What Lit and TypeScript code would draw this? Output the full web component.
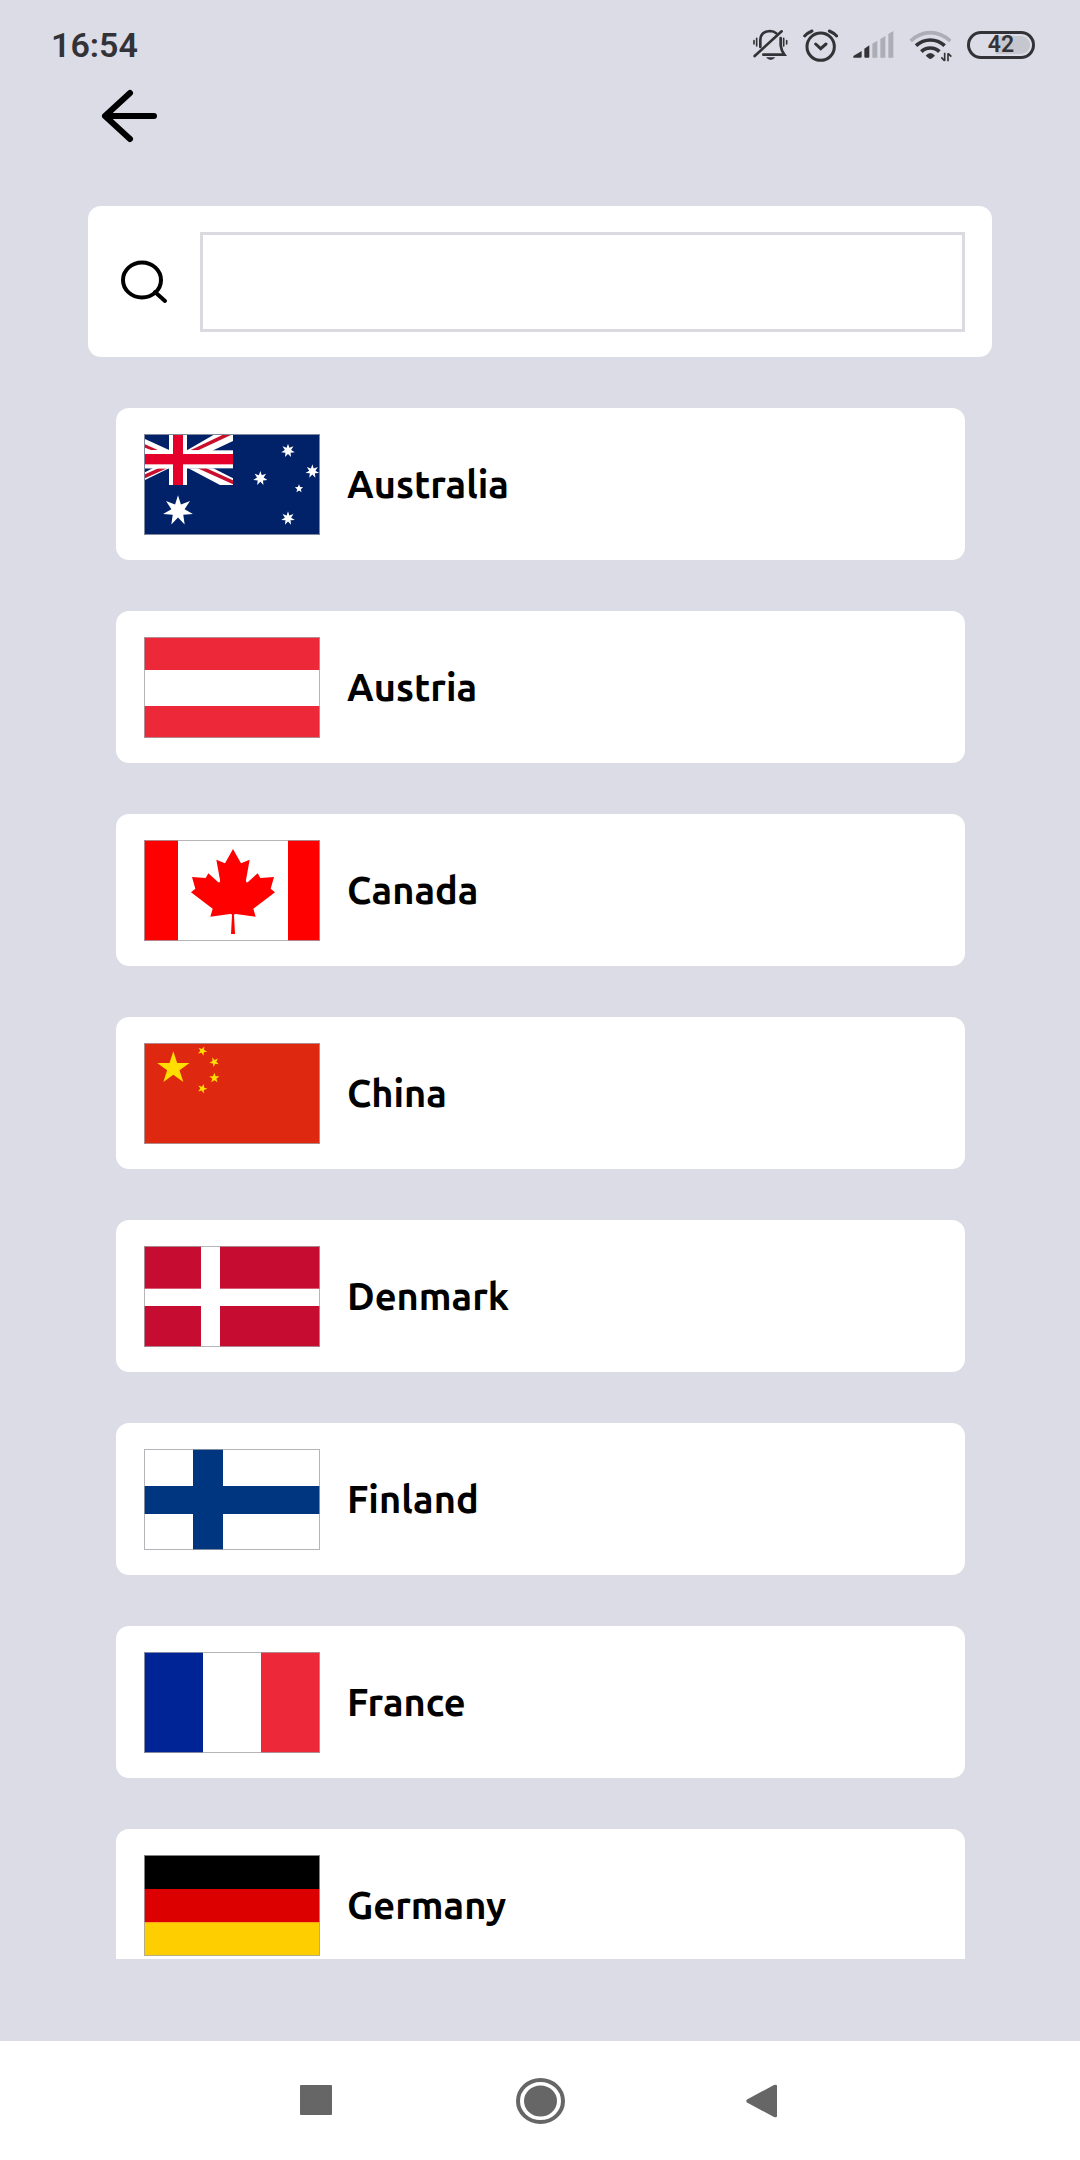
import { LitElement, html, svg, css, type SVGTemplateResult } from "lit";
import { customElement, property, state } from "lit/decorators.js";

/** Points of a regular star polygon, starting at the given angle (degrees, 0 = up). */
function star(cx: number, cy: number, outer: number, tips = 5, turn = 0, ratio = 0.4): string {
  const points: string[] = [];
  for (let i = 0; i < tips * 2; i++) {
    const r = i % 2 ? outer * ratio : outer;
    const a = (turn * Math.PI) / 180 + (i * Math.PI) / tips;
    points.push(`${(cx + r * Math.sin(a)).toFixed(1)},${(cy - r * Math.cos(a)).toFixed(1)}`);
  }
  return points.join(" ");
}

const rect = (x: number, y: number, w: number, h: number, fill: string) =>
  svg`<rect x=${x} y=${y} width=${w} height=${h} fill=${fill}></rect>`;

const poly = (points: string, fill: string) => svg`<polygon points=${points} fill=${fill}></polygon>`;

/** Flag artwork on a 528 x 303 canvas. */
const flags: Record<string, SVGTemplateResult> = {
  Australia: svg`
    ${rect(0, 0, 528, 303, "#012169")}
    <svg x="3" y="3" width="264" height="150" viewBox="0 0 264 150">
      ${poly("0,12 74,46 126,46 205,0 264,0 264,18 205,46 130,100 225,150 264,150 264,130 205,100 72,100 0,135 0,112 60,80 0,47", "#fff")}
      ${poly("0,28 40,46 20,46 0,38", "#c8102e")}
      ${poly("136,46 160,46 258,0 232,0", "#c8102e")}
      ${poly("0,118 40,100 66,100 0,130", "#c8102e")}
      ${poly("158,100 184,100 264,136 264,148", "#c8102e")}
      ${poly("0,48 30,46 72,46 72,100 0,100", "#fff")}
      ${rect(72, 0, 54, 150, "#fff")}
      ${rect(0, 46, 264, 54, "#fff")}
      ${rect(84, 0, 30, 150, "#e4002b")}
      ${rect(0, 57, 264, 31, "#e4002b")}
    </svg>
    ${poly(star(102, 230, 46, 7, 0, 0.44), "#fff")}
    ${poly(star(432, 50, 21, 7, 0, 0.46), "#fff")}
    ${poly(star(349, 133, 22, 7, 0, 0.46), "#fff")}
    ${poly(star(505, 112, 21, 7, 0, 0.46), "#fff")}
    ${poly(star(465, 164, 13, 5, 0, 0.45), "#fff")}
    ${poly(star(432, 253, 21, 7, 0, 0.46), "#fff")}`,
  Austria: svg`
    ${rect(0, 0, 528, 303, "#ed2939")}
    ${rect(0, 99, 528, 108, "#fff")}`,
  Canada: svg`
    ${rect(0, 0, 528, 303, "#fff")}
    ${rect(0, 0, 102, 303, "#f00")}
    ${rect(432, 0, 96, 303, "#f00")}
    <path fill="#f00" d="M267 27 243 70 217 59 228 120Q229 130 222 126L193 100 185 114 144 111 154 146 141 157 206 206 199 230 258 222Q264 221 264 226L261 282H273L270 226Q270 221 276 222L335 230 328 206 393 157 380 146 390 111 349 114 341 100 312 126Q305 130 306 120L317 59 291 70Z"></path>`,
  China: svg`
    ${rect(0, 0, 528, 303, "#de2910")}
    ${poly(star(88, 76, 51, 5, 0, 0.382), "#ffde00")}
    ${poly(star(175, 24, 15, 5, 23, 0.4), "#ffde00")}
    ${poly(star(211, 57, 15, 5, 45, 0.4), "#ffde00")}
    ${poly(star(211, 105, 16, 5, 0, 0.4), "#ffde00")}
    ${poly(star(175, 137, 15, 5, 20, 0.4), "#ffde00")}`,
  Denmark: svg`
    ${rect(0, 0, 528, 303, "#c60c30")}
    ${rect(171, 0, 57, 303, "#fff")}
    ${rect(0, 128, 528, 52, "#fff")}`,
  Finland: svg`
    ${rect(0, 0, 528, 303, "#fff")}
    ${rect(147, 0, 90, 303, "#003580")}
    ${rect(0, 111, 528, 84, "#003580")}`,
  France: svg`
    ${rect(0, 0, 528, 303, "#fff")}
    ${rect(0, 0, 177, 303, "#002395")}
    ${rect(351, 0, 177, 303, "#ed2939")}`,
  Germany: svg`
    ${rect(0, 0, 528, 103, "#000")}
    ${rect(0, 102, 528, 101, "#d00")}
    ${rect(0, 202, 528, 101, "#ffce00")}`,
};

@customElement("status-bar")
class StatusBar extends LitElement {
  static styles = css`
    :host {
      display: flex;
      align-items: center;
      justify-content: space-between;
      height: 88px;
      padding: 2px 45px 0 51px;
      box-sizing: border-box;
      font-family: Roboto, sans-serif;
      color: #333337;
    }
    .time {
      font-size: 34px;
      line-height: 40px;
      font-weight: 600;
    }
    .icons {
      display: flex;
      align-items: center;
      gap: 15px;
    }
    svg {
      display: block;
    }
    .battery {
      box-sizing: border-box;
      width: 68px;
      height: 28px;
      border: 3px solid #333337;
      border-radius: 14px;
      padding: 2px;
      font-size: 23px;
      line-height: 18px;
      font-weight: 600;
      text-align: center;
    }
    .level {
      border-radius: 9px;
      background: linear-gradient(to right, transparent 42%, #c6c6ce 42%);
    }
  `;

  render() {
    return html`
      <span class="time">16:54</span>
      <div class="icons">
        <svg width="35" height="34" viewBox="101 82 105 102" fill="none" stroke="#333337" stroke-width="8" stroke-linecap="round">
          <path d="M123 139V118Q124 92 152 91Q164 91 171 98M184 112V134Q186 150 195 162H132"></path>
          <path d="M106 166 187 92"></path>
          <path d="M104 120V130M112 113V136M193 113V136M202 120V130" stroke-width="5"></path>
          <path d="M140 170H168Q162 178 154 178T140 170Z" fill="#333337" stroke="none"></path>
        </svg>
        <svg width="35" height="34" viewBox="252 82 105 102" fill="none" stroke="#333337" stroke-width="9" stroke-linecap="round">
          <circle cx="305" cy="138" r="41"></circle>
          <path d="M290 130 305 144 321 130M257 106Q265 97 279 91M353 106Q345 97 331 91"></path>
        </svg>
        <svg width="41" height="34" viewBox="398 82 123 102">
          <path fill="#333337" d="M399 171V166L424 151V168Q424 171 420 171ZM432 144 447 134V168Q447 171 444 171H435Q432 171 432 168Z"></path>
          <path fill="#adadb6" d="M456 129 471 120V171H456ZM480 115 495 106V171H480ZM504 100 519 91V171H504Z"></path>
        </svg>
        <svg width="43" height="34" viewBox="566 82 129 102" fill="none" stroke="#333337" stroke-width="11">
          <path d="M571 121Q598 96 630 96T690 121" stroke="#adadb6"></path>
          <path d="M587 135Q606 118 630 118T673 135M603 153Q614 142 630 142T657 153"></path>
          <path d="M616 165Q622 157 630 157T644 165L635 173Q630 177 625 173Z" fill="#333337" stroke="none"></path>
          <path d="M673 156V181M663 170 673 181M683 182V158M683 158 693 168" stroke-width="5"></path>
        </svg>
        <div class="battery"><div class="level">42</div></div>
      </div>
    `;
  }
}

@customElement("country-card")
class CountryCard extends LitElement {
  @property() name = "";

  static styles = css`
    :host {
      display: block;
    }
    .card {
      display: flex;
      align-items: center;
      gap: 27px;
      width: 100%;
      height: 152px;
      padding: 0 28px;
      box-sizing: border-box;
      border: 0;
      border-radius: 13px;
      background: #fff;
      color: #000;
      font-family: Ubuntu, "Noto Sans", sans-serif;
      font-size: 38px;
      line-height: 48px;
      font-weight: 700;
      text-align: left;
    }
    .flag {
      flex: none;
      display: block;
      width: 176px;
      height: 101px;
    }
  `;

  render() {
    return html`
      <button class="card" type="button">
        <svg class="flag" viewBox="0 0 528 303" aria-hidden="true">
          ${flags[this.name]}
          <rect x="1" y="1" width="526" height="301" fill="none" stroke="#a3a3a8" stroke-opacity="0.8" stroke-width="4"></rect>
        </svg>
        <span>${this.name}</span>
      </button>
    `;
  }
}

@customElement("navigation-bar")
class NavigationBar extends LitElement {
  static styles = css`
    :host {
      display: flex;
      justify-content: center;
      align-items: center;
      gap: 123px;
      height: 119px;
      background: #fff;
    }
    button {
      display: grid;
      place-items: center;
      width: 100px;
      height: 100px;
      padding: 0;
      border: 0;
      background: none;
    }
  `;

  render() {
    return html`
      <button type="button" aria-label="Recent apps">
        <svg width="34" height="32" viewBox="0 0 34 32"><rect width="32" height="30" rx="1" fill="#666"></rect></svg>
      </button>
      <button type="button" aria-label="Home">
        <svg width="49" height="46" viewBox="0 0 49 46">
          <ellipse cx="24.500" cy="23" rx="22.500" ry="21" fill="none" stroke="#666" stroke-width="4"></ellipse>
          <ellipse cx="24.500" cy="23" rx="16.500" ry="15.500" fill="#666"></ellipse>
        </svg>
      </button>
      <button type="button" aria-label="Back">
        <svg width="34" height="34" viewBox="0 0 34 34"><path fill="#666" d="M1 15.500 28 1Q31 0 31 2V32Q31 34 28 33L1 18.500Q-.5 17 1 15.500Z"></path></svg>
      </button>
    `;
  }
}

@customElement("app-root")
class AppRoot extends LitElement {
  @state() private query = "";

  static styles = css`
    :host {
      display: flex;
      flex-direction: column;
      height: 100vh;
      background: #dcdce6;
    }
    .back {
      align-self: flex-start;
      display: block;
      margin: 0 0 62px 100px;
      padding: 0;
      border: 0;
      background: none;
    }
    .back svg,
    .search svg {
      display: block;
    }
    .search {
      display: flex;
      align-items: center;
      gap: 31px;
      margin: 0 88px 51px;
      padding: 26px 27px 25px 32px;
      border-radius: 13px;
      background: #fff;
    }
    .search input {
      flex: 1;
      min-width: 0;
      height: 100px;
      box-sizing: border-box;
      padding: 0 24px;
      border: 3px solid #dadae0;
      border-radius: 0;
      outline: none;
      background: #fff;
      font-family: Ubuntu, "Noto Sans", sans-serif;
      font-size: 38px;
    }
    .countries {
      flex: 1 1 0;
      min-height: 0;
      display: flex;
      flex-direction: column;
      gap: 51px;
      margin: 0 115px 82px 116px;
      padding: 0;
      list-style: none;
      overflow-y: auto;
      scrollbar-width: none;
    }
    .countries li {
      flex: none;
    }
  `;

  render() {
    const needle = this.query.trim().toLowerCase();
    const names = Object.keys(flags).filter((name) => name.toLowerCase().includes(needle));
    return html`
      <status-bar></status-bar>
      <button class="back" type="button" aria-label="Back">
        <svg width="58" height="56" viewBox="0 0 58 56" fill="none" stroke="#000" stroke-width="6" stroke-linecap="round" stroke-linejoin="round">
          <path d="M54 28H5M30 5 5 28 30 51"></path>
          <path d="M5 28 13 22V34Z" fill="#000" stroke="none"></path>
        </svg>
      </button>
      <label class="search">
        <svg width="49" height="46" viewBox="0 0 49 46" fill="none" stroke="#000" stroke-width="4" stroke-linecap="round" role="img" aria-label="Search">
          <ellipse cx="22" cy="21" rx="19" ry="17.500"></ellipse>
          <path d="M35 33 45 42"></path>
        </svg>
        <input type="text" .value=${this.query} @input=${(e: Event) => (this.query = (e.target as HTMLInputElement).value)} />
      </label>
      <ul class="countries">
        ${names.map((name) => html`<li><country-card name=${name}></country-card></li>`)}
      </ul>
      <navigation-bar></navigation-bar>
    `;
  }
}
